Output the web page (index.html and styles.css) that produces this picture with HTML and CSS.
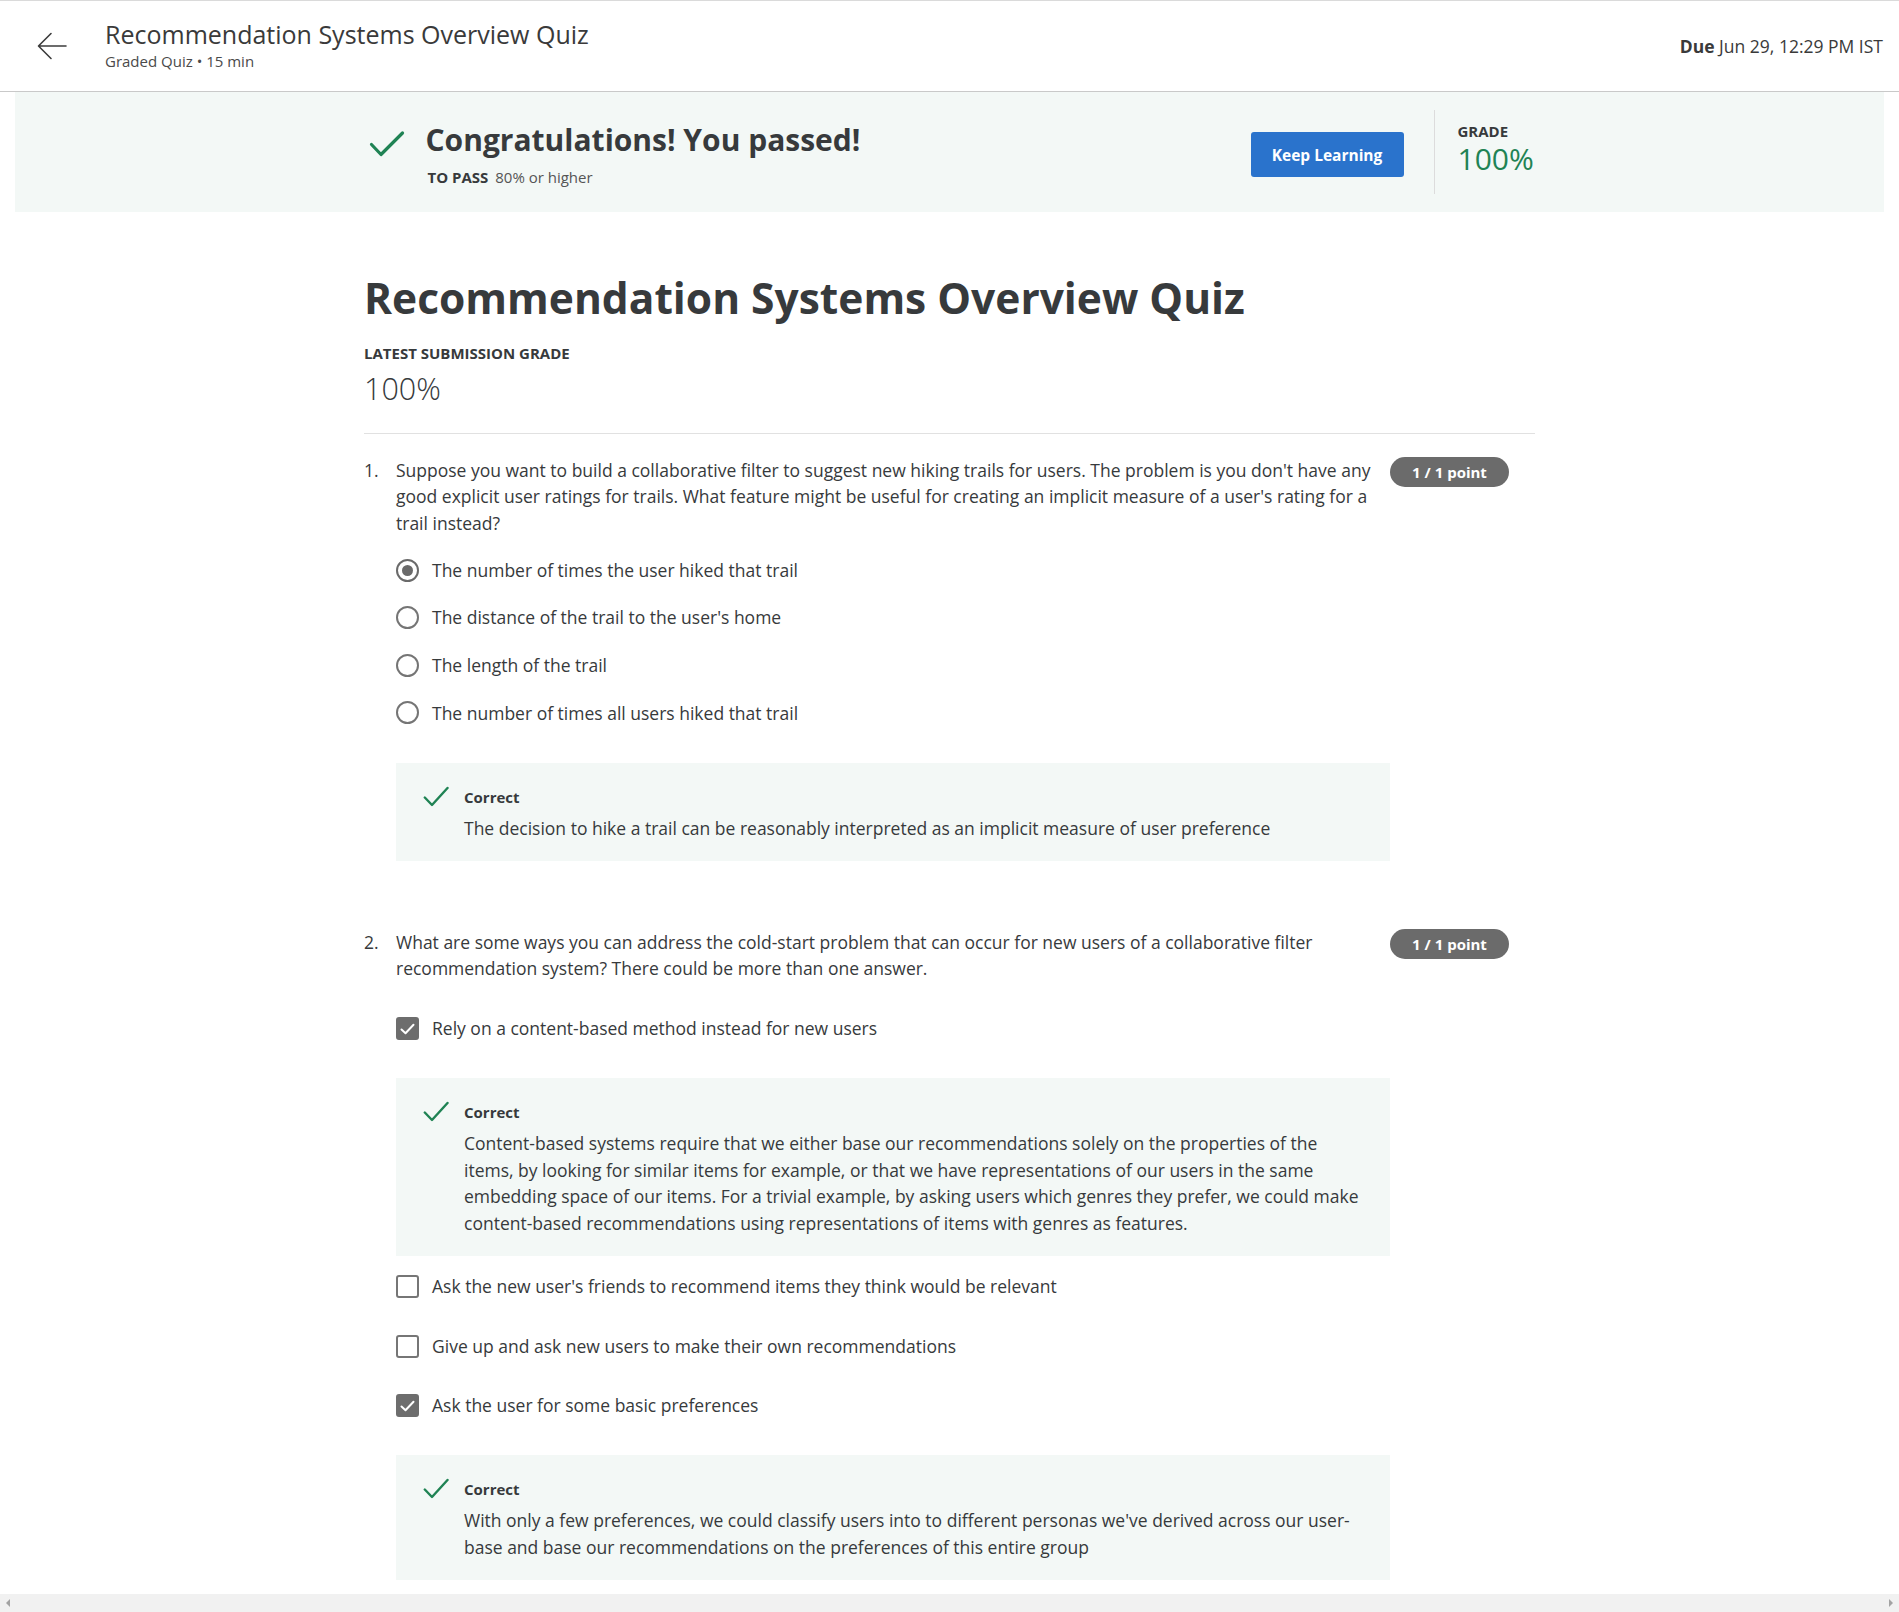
FILE: index.html
```html
<!DOCTYPE html>
<html lang="en">
<head>
<meta charset="utf-8">
<title>Recommendation Systems Overview Quiz</title>
<link rel="stylesheet" href="styles.css">
</head>
<body>
<div class="page">
  <header class="topbar">
    <span class="back">
      <svg width="32" height="32" viewBox="0 0 32 32" fill="none" stroke="#3c3c3c" stroke-width="1.6" stroke-linecap="round" stroke-linejoin="round"><path d="M30 16H3M15 3.5L2.5 16L15 28.5"/></svg>
    </span>
    <div class="titles">
      <div class="ttl">Recommendation Systems Overview Quiz</div>
      <div class="sub">Graded Quiz • 15 min</div>
    </div>
    <div class="due"><b>Due</b> Jun 29, 12:29 PM IST</div>
  </header>

  <section class="banner">
    <div class="banner-inner">
      <div class="pass">
        <svg class="pass-check" width="36" height="28" viewBox="0 0 36 28" fill="none" stroke="#1f8354" stroke-width="3.2" stroke-linecap="round" stroke-linejoin="round"><path d="M2.5 14.5L12 24.5L33.5 3"/></svg>
        <div class="pass-text">
          <h2 class="pass-title">Congratulations! You passed!</h2>
          <div class="topass"><b>TO PASS</b> <span>80% or higher</span></div>
        </div>
      </div>
      <div class="grade-area">
        <button class="keep">Keep Learning</button>
        <div class="vdiv"></div>
        <div class="grade">
          <div class="glabel">GRADE</div>
          <div class="gval">100%</div>
        </div>
      </div>
    </div>
  </section>

  <main class="content">
    <h1 class="main-title">Recommendation Systems Overview Quiz</h1>
    <div class="lsg">LATEST SUBMISSION GRADE</div>
    <div class="lsg-val">100%</div>
    <div class="sep"></div>

    <div class="question q1">
      <div class="q-head">
        <span class="q-num">1.</span>
        <div class="q-text">Suppose you want to build a collaborative filter to suggest new hiking trails for users. The problem is you don't have any good explicit user ratings for trails. What feature might be useful for creating an implicit measure of a user's rating for a trail instead?</div>
        <span class="badge">1 / 1 point</span>
      </div>
      <div class="options radios">
        <div class="opt"><span class="radio on"></span><span>The number of times the user hiked that trail</span></div>
        <div class="opt"><span class="radio"></span><span>The distance of the trail to the user's home</span></div>
        <div class="opt"><span class="radio"></span><span>The length of the trail</span></div>
        <div class="opt"><span class="radio"></span><span>The number of times all users hiked that trail</span></div>
        <div class="feedback">
          <svg class="fb-icon" width="26" height="22" viewBox="0 0 26 22" fill="none" stroke="#1f8354" stroke-width="2.4" stroke-linecap="round" stroke-linejoin="round"><path d="M1.8 11.5L9 19L24.5 2"/></svg>
          <div class="fb-body">
            <div class="fb-title">Correct</div>
            <div class="fb-text">The decision to hike a trail can be reasonably interpreted as an implicit measure of user preference</div>
          </div>
        </div>
      </div>
    </div>

    <div class="question q2">
      <div class="q-head">
        <span class="q-num">2.</span>
        <div class="q-text">What are some ways you can address the cold-start problem that can occur for new users of a collaborative filter recommendation system? There could be more than one answer.</div>
        <span class="badge">1 / 1 point</span>
      </div>
      <div class="options checks">
        <div class="opt"><span class="cbox on"><svg width="15" height="12" viewBox="0 0 15 12" fill="none" stroke="#fff" stroke-width="2" stroke-linecap="round" stroke-linejoin="round"><path d="M1.5 6.5L5.5 10.2L13.5 1.8"/></svg></span><span>Rely on a content-based method instead for new users</span></div>
        <div class="feedback fb-after">
          <svg class="fb-icon" width="26" height="22" viewBox="0 0 26 22" fill="none" stroke="#1f8354" stroke-width="2.4" stroke-linecap="round" stroke-linejoin="round"><path d="M1.8 11.5L9 19L24.5 2"/></svg>
          <div class="fb-body">
            <div class="fb-title">Correct</div>
            <div class="fb-text">Content-based systems require that we either base our recommendations solely on the properties of the items, by looking for similar items for example, or that we have representations of our users in the same embedding space of our items. For a trivial example, by asking users which genres they prefer, we could make content-based recommendations using representations of items with genres as features.</div>
          </div>
        </div>
        <div class="opt"><span class="cbox"></span><span>Ask the new user's friends to recommend items they think would be relevant</span></div>
        <div class="opt"><span class="cbox"></span><span>Give up and ask new users to make their own recommendations</span></div>
        <div class="opt"><span class="cbox on"><svg width="15" height="12" viewBox="0 0 15 12" fill="none" stroke="#fff" stroke-width="2" stroke-linecap="round" stroke-linejoin="round"><path d="M1.5 6.5L5.5 10.2L13.5 1.8"/></svg></span><span>Ask the user for some basic preferences</span></div>
        <div class="feedback">
          <svg class="fb-icon" width="26" height="22" viewBox="0 0 26 22" fill="none" stroke="#1f8354" stroke-width="2.4" stroke-linecap="round" stroke-linejoin="round"><path d="M1.8 11.5L9 19L24.5 2"/></svg>
          <div class="fb-body">
            <div class="fb-title">Correct</div>
            <div class="fb-text">With only a few preferences, we could classify users into to different personas we've derived across our user-base and base our recommendations on the preferences of this entire group</div>
          </div>
        </div>
      </div>
    </div>
  </main>

  <div class="hscroll"><span class="arr left"></span><span class="arr right"></span></div>
</div>
</body>
</html>
```
FILE: styles.css
```css
html, body {
  margin: 0;
  padding: 0;
  height: 100%;
  overflow: hidden;
}
body {
  font-family: "Open Sans", "Liberation Sans", sans-serif;
  color: #373a3c;
  background: #fff;
}
.page {
  height: 100vh;
  overflow: hidden;
  position: relative;
}

/* top bar */
.topbar {
  display: flex;
  align-items: center;
  height: 90px;
  border-top: 1px solid #dadada;
  border-bottom: 1px solid #c9c9c9;
  padding: 0 16px 0 36px;
}
.back { display: flex; width: 32px; height: 32px; }
.titles { flex: 1; margin-left: 37px; margin-top: -2px; }
.ttl { font-size: 25px; line-height: 32px; color: #3a3a3a; }
.sub { font-size: 15px; line-height: 21px; color: #4a4a4a; margin-top: 1px; }
.due { font-size: 17.5px; line-height: 24px; color: #3a3a3a; }
.due b { font-weight: 700; }

/* banner */
.banner {
  margin: 0 15px;
  background: #f3f8f6;
  padding: 18px 0 18px;
}
.banner-inner {
  width: 1170px;
  margin: 0 auto;
  display: flex;
  justify-content: space-between;
  align-items: center;
}
.pass { display: flex; align-items: flex-start; padding-left: 4px; padding-top: 4px; }
.pass-check { margin-top: 10px; flex: none; }
.pass-text { margin-left: 21px; }
.pass-title { margin: 0; font-size: 30px; line-height: 40px; font-weight: 700; color: #373a3c; }
.topass { margin-top: 7px; font-size: 15px; line-height: 21px; color: #555; padding-left: 2px; }
.topass b { color: #373a3c; margin-right: 3px; }
.grade-area { display: flex; align-items: center; }
.keep {
  width: 153px;
  height: 45px;
  margin-top: 5px;
  border: 0;
  border-radius: 3px;
  background: #2a73cc;
  color: #fff;
  font-family: "Open Sans", sans-serif;
  font-size: 15.5px;
  font-weight: 700;
}
.vdiv { width: 1px; height: 84px; background: #dcdcdc; margin: 0 23px 0 30px; }
.grade { width: 77px; margin-bottom: 6px; }
.glabel { font-size: 15px; line-height: 20px; font-weight: 700; color: #373a3c; }
.gval { font-size: 30px; line-height: 36px; color: #1f8354; }

/* content */
.content {
  width: 1171px;
  margin: 0 auto;
  padding-top: 60px;
}
.main-title { margin: 0; font-size: 42.5px; line-height: 52px; font-weight: 700; color: #373a3c; }
.lsg { margin-top: 19px; font-size: 15px; line-height: 20px; font-weight: 700; }
.lsg-val { margin-top: 7px; font-size: 30.5px; line-height: 36px; font-weight: 300; }
.sep { margin-top: 27px; height: 1px; background: #e1e1e1; }

.question { font-size: 17.5px; line-height: 26.4px; }
.q1 { margin-top: 23px; }
.q2 { margin-top: 68px; }
.q-head { display: flex; align-items: flex-start; }
.q-num { width: 32px; flex: none; }
.q-text { flex: 1; }
.badge {
  flex: none;
  width: 119px;
  height: 30px;
  margin-left: 10px;
  margin-right: 26px;
  border-radius: 15px;
  background: #6b6b6b;
  color: #fff;
  font-size: 15px;
  line-height: 30px;
  font-weight: 700;
  text-align: center;
}

.options { padding-left: 32px; }
.radios { margin-top: 10px; }
.checks { margin-top: 17px; }
.opt { display: flex; align-items: center; }
.radios .opt { height: 47.6px; }
.checks .opt { height: 59.5px; }
.radio {
  flex: none;
  width: 23px;
  height: 23px;
  box-sizing: border-box;
  border: 2px solid #757575;
  border-radius: 50%;
  margin-right: 13px;
  display: flex;
  align-items: center;
  justify-content: center;
}
.radio.on { border-color: #6a6a6a; }
.radio.on::after {
  content: "";
  width: 11px;
  height: 11px;
  border-radius: 50%;
  background: #6a6a6a;
}
.cbox {
  flex: none;
  width: 23px;
  height: 23px;
  box-sizing: border-box;
  border: 2px solid #767676;
  border-radius: 3px;
  margin-right: 13px;
  display: flex;
  align-items: center;
  justify-content: center;
}
.cbox.on { background: #6d6d6d; border-color: #6d6d6d; }

.feedback {
  width: 994px;
  box-sizing: border-box;
  margin-top: 26px;
  background: #f3f8f6;
  padding: 24px 24px 20px 27px;
  display: flex;
  align-items: flex-start;
}
.checks .feedback { margin-top: 20px; }
.fb-after { margin-bottom: 1px; }
.fb-icon { flex: none; margin-right: 15px; margin-top: -1px; }
.fb-title { font-size: 15px; line-height: 20px; font-weight: 700; }
.fb-text { margin-top: 8px; font-size: 17.5px; line-height: 26.4px; }

/* fake horizontal scrollbar overlay */
.hscroll {
  position: fixed;
  left: 0;
  right: 0;
  bottom: 0;
  height: 18px;
  background: #f1f1f1;
}
.arr {
  position: absolute;
  top: 5px;
  width: 0;
  height: 0;
  border-top: 4px solid transparent;
  border-bottom: 4px solid transparent;
}
.arr.left { left: 6px; border-right: 4px solid #a3a3a3; }
.arr.right { right: 6px; border-left: 4px solid #a3a3a3; }
```
